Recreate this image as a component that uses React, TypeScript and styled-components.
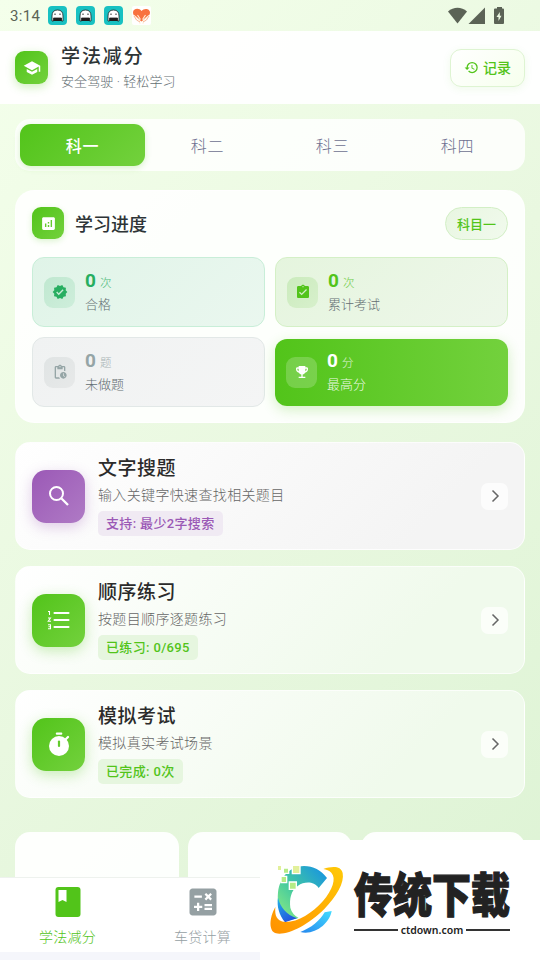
import React from "react";
import styled, { createGlobalStyle, css } from "styled-components";
import {
  MdSchool,
  MdHistory,
  MdAnalytics,
  MdVerified,
  MdAssignmentTurnedIn,
  MdPendingActions,
  MdEmojiEvents,
  MdCalculate,
} from "react-icons/md";

const Global = createGlobalStyle`
  * { box-sizing: border-box; }
  body {
    margin: 0;
    font-family: Roboto, "Noto Sans CJK SC", sans-serif;
    color: #2d3436;
    overflow: hidden;
  }
  svg { display: block; flex: none; }
`;

const green = "linear-gradient(135deg, #52c41a, #73d13d)";

const Screen = styled.div`
  position: relative;
  display: flex;
  flex-direction: column;
  width: 540px;
  height: 960px;
  overflow: hidden;
  background: linear-gradient(135deg, #f4ffeb 0%, #e9f8e0 50%, #ddf3d4 100%);
`;

const StatusBar = styled.div`
  display: flex;
  align-items: center;
  flex: none;
  height: 31px;
  padding: 0 35px 0 10px;
  color: #5b6356;
`;

const Clock = styled.span`
  width: 38px;
  font-size: 15px;
  letter-spacing: 0.3px;
`;

const AppBadges = styled.div`
  display: flex;
  gap: 9px;
`;

const SystemIcons = styled.div`
  display: flex;
  align-items: center;
  margin-left: auto;
`;

const Header = styled.header`
  display: flex;
  align-items: center;
  flex: none;
  height: 73px;
  padding: 0 15px;
  background: rgba(255, 255, 255, 0.94);
`;

const IconTile = styled.div<{ $size: number; $radius: number; $bg?: string; $shadow?: string }>`
  display: flex;
  align-items: center;
  justify-content: center;
  flex: none;
  width: ${(p) => p.$size}px;
  height: ${(p) => p.$size}px;
  border-radius: ${(p) => p.$radius}px;
  color: #fff;
  background: ${(p) => p.$bg ?? green};
  box-shadow: ${(p) => p.$shadow ?? "0 3px 10px rgba(82, 196, 26, 0.28)"};
`;

const HeaderText = styled.div`
  margin-left: 13px;
  flex: 1;
`;

const AppTitle = styled.div`
  font-size: 19px;
  line-height: 26px;
  font-weight: 500;
  letter-spacing: 1.9px;
`;

const AppSubtitle = styled.div`
  margin-top: 2px;
  font-size: 13px;
  line-height: 20px;
  font-weight: 300;
  letter-spacing: 0.1px;
  color: #636e72;
`;

const RecordButton = styled.button`
  display: flex;
  align-items: center;
  gap: 4px;
  width: 75px;
  height: 38px;
  padding: 0 0 1px 13px;
  border: 1px solid #def4d2;
  border-radius: 11px;
  background: linear-gradient(135deg, #ffffff, #f6ffed);
  box-shadow: 0 2px 8px rgba(82, 196, 26, 0.08);
  color: #52c41a;
  font: 500 14px Roboto, "Noto Sans CJK SC", sans-serif;
`;

const Tabs = styled.nav`
  display: flex;
  flex: none;
  height: 52px;
  margin: 15px 15px 0;
  padding: 5px 5px;
  border-radius: 15px;
  background: rgba(255, 255, 255, 0.83);
`;

const Tab = styled.div<{ $active?: boolean }>`
  display: flex;
  align-items: center;
  justify-content: center;
  flex: 1;
  height: 42px;
  border-radius: 11px;
  font-size: 16px;
  font-weight: 300;
  letter-spacing: 0.7px;
  color: #6e7191;
  ${(p) =>
    p.$active &&
    css`
      color: #fff;
      font-weight: 500;
      background: ${green};
      box-shadow: 0 2px 6px rgba(82, 196, 26, 0.22);
    `}
`;

const ProgressCard = styled.section`
  flex: none;
  height: 233px;
  margin: 19px 15px 0;
  padding: 15px 16px;
  border: 1px solid rgba(255, 255, 255, 0.9);
  border-radius: 19px;
  background: rgba(255, 255, 255, 0.89);
`;

const CardHead = styled.div`
  display: flex;
  align-items: center;
  height: 34px;
`;

const CardTitle = styled.div`
  flex: 1;
  margin-left: 11px;
  font-size: 18px;
  font-weight: 500;
`;

const SubjectPill = styled.div`
  display: flex;
  align-items: center;
  justify-content: center;
  width: 63px;
  height: 33px;
  border: 1px solid #d2efc5;
  border-radius: 17px;
  background: linear-gradient(135deg, #e8f6e1, #f1faed);
  color: #52c41a;
  font-size: 13px;
  font-weight: 500;
`;

const StatGrid = styled.div`
  display: grid;
  grid-template-columns: 1fr 1fr;
  grid-auto-rows: 70px;
  gap: 10px;
  margin-top: 17px;
`;

type Tone = "pass" | "total" | "pending" | "best";

const tones: Record<Tone, { bg: string; line: string; tile: string; ink: string; label: string }> = {
  pass: {
    bg: "linear-gradient(135deg, #e0f4e8, #eaf7ef)",
    line: "#c8eed8",
    tile: "linear-gradient(135deg, #c0e8d0, #ceeedb)",
    ink: "#27ae60",
    label: "#636e72",
  },
  total: {
    bg: "linear-gradient(135deg, #e5f5de, #eef7ea)",
    line: "#d4f0c6",
    tile: "linear-gradient(135deg, #cbebbd, #d7f0cc)",
    ink: "#52c41a",
    label: "#636e72",
  },
  pending: {
    bg: "linear-gradient(135deg, #f0f2f2, #f4f5f5)",
    line: "#e2e8e7",
    tile: "linear-gradient(135deg, #e0e4e4, #e7e9e9)",
    ink: "#95a5a6",
    label: "#636e72",
  },
  best: {
    bg: "linear-gradient(90deg, #52c41a, #73d13d)",
    line: "transparent",
    tile: "rgba(255, 255, 255, 0.2)",
    ink: "#ffffff",
    label: "rgba(255, 255, 255, 0.92)",
  },
};

const Stat = styled.div<{ $tone: Tone }>`
  display: flex;
  align-items: center;
  padding-left: 11px;
  border: 1px solid ${(p) => tones[p.$tone].line};
  border-radius: 12px;
  background: ${(p) => tones[p.$tone].bg};
  color: ${(p) => tones[p.$tone].ink};
  ${(p) =>
    p.$tone === "best" &&
    css`
      height: 67px;
      margin-top: 1.5px;
      padding-left: 11px;
      border: 0;
      box-shadow: 0 4px 13px rgba(82, 196, 26, 0.24);
    `}
`;

const StatTile = styled.div<{ $tone: Tone }>`
  display: flex;
  align-items: center;
  justify-content: center;
  width: 31px;
  height: 31px;
  border-radius: 9px;
  background: ${(p) => tones[p.$tone].tile};
`;

const StatText = styled.div`
  margin-left: 10px;
  padding-top: 1px;
`;

const StatValue = styled.div`
  display: flex;
  align-items: baseline;
  gap: 4px;
  height: 24px;
  font-size: 19px;
  line-height: 24px;
  font-weight: 700;
`;

const Unit = styled.span`
  font-size: 11.5px;
  font-weight: 300;
  opacity: 0.8;
`;

const StatLabel = styled.div<{ $tone: Tone }>`
  font-size: 13px;
  line-height: 23px;
  font-weight: 300;
  color: ${(p) => tones[p.$tone].label};
`;

const Features = styled.section`
  display: flex;
  flex-direction: column;
  flex: none;
  gap: 16px;
  margin: 19px 15px 0;
`;

const Feature = styled.article<{ $plain?: boolean }>`
  display: flex;
  align-items: center;
  height: 108px;
  padding: 0 16px;
  border: 1px solid rgba(255, 255, 255, 0.75);
  border-radius: 15px;
  background: ${(p) =>
    p.$plain
      ? "linear-gradient(135deg, #ffffff, #f4f4f4 80%)"
      : "linear-gradient(135deg, #ffffff, #f0faec 75%)"};
`;

const FeatureText = styled.div`
  display: flex;
  flex-direction: column;
  align-items: flex-start;
  flex: 1;
  margin-left: 13px;
`;

const FeatureTitle = styled.div`
  font-size: 19px;
  line-height: 26px;
  font-weight: 500;
  letter-spacing: 0.5px;
  color: #2b2b2b;
`;

const FeatureNote = styled.div`
  font-size: 14px;
  line-height: 26px;
  font-weight: 300;
  letter-spacing: 0.35px;
  color: #666;
`;

const Tag = styled.div<{ $violet?: boolean }>`
  margin-top: 3px;
  padding: 0 8px;
  border-radius: 5px;
  font-size: 13px;
  line-height: 25px;
  font-weight: 500;
  letter-spacing: 0.35px;
  color: ${(p) => (p.$violet ? "#9b59b6" : "#52c41a")};
  background: ${(p) => (p.$violet ? "#f0eaf3" : "#e6f6df")};
`;

const Arrow = styled.div`
  display: flex;
  align-items: center;
  justify-content: center;
  width: 27px;
  height: 27px;
  border-radius: 7px;
  background: rgba(255, 255, 255, 0.7);
`;

const Shortcuts = styled.section`
  display: grid;
  grid-template-columns: repeat(3, 1fr);
  gap: 9px;
  flex: 1;
  min-height: 0;
  margin: 34px 15px 0;
`;

const Shortcut = styled.div`
  border-radius: 15px 15px 0 0;
  background: rgba(255, 255, 255, 0.93);
`;

const BottomNav = styled.nav`
  display: grid;
  grid-template-columns: repeat(4, 135px);
  flex: none;
  height: 83px;
  border-top: 1px solid #eef2ee;
  border-bottom: 8px solid #f5f6fb;
  background: #fff;
`;

const NavItem = styled.div<{ $active?: boolean }>`
  display: flex;
  flex-direction: column;
  align-items: center;
  padding-top: 7px;
  font-size: 14px;
  line-height: 20px;
  font-weight: 300;
  letter-spacing: 0.25px;
  color: ${(p) => (p.$active ? "#52c41a" : "#95a0a3")};
`;

const NavIcon = styled.div`
  display: flex;
  align-items: center;
  height: 34px;
  margin-bottom: 8px;
  color: inherit;
`;

const Watermark = styled.aside`
  position: absolute;
  right: 0;
  bottom: 0;
  display: flex;
  width: 280px;
  height: 120px;
  padding-top: 15px;
  background: #fff;
`;

const Brand = styled.div`
  width: 156px;
  margin-left: 4px;
  color: #222;
`;

const BrandName = styled.div`
  height: 69px;
  font-family: "Noto Sans CJK SC", sans-serif;
  font-size: 39px;
  line-height: 73px;
  font-weight: 900;
  white-space: nowrap;
  transform: scaleY(1.2);
  -webkit-text-stroke: 1px #222;
`;

const BrandSite = styled.div`
  display: flex;
  align-items: center;
  gap: 3px;
  height: 12px;
  font: 600 10.5px "Noto Sans", sans-serif;
  &::before,
  &::after {
    content: "";
    flex: 1;
    height: 2px;
    background: #333;
  }
`;

const GhostBadge = () => (
  <svg width="19" height="19" viewBox="0 0 19 19">
    <rect width="19" height="19" rx="4" fill="#18c1c2" />
    <path d="M4 15V10Q4 4 9.5 4Q15 4 15 10V15H13.500V12H5.500V15Z" fill="#fff" stroke="#222" strokeWidth=".8" />
    <path d="M6 12H13.500V15H5.500Z" fill="#201c1c" />
    <path d="M7 7.500V9M12 7.500V9" stroke="#222" strokeWidth="1" />
  </svg>
);

const HeartBadge = () => (
  <svg width="19" height="19" viewBox="0 0 19 19">
    <rect width="19" height="19" rx="2" fill="#fff" />
    <path d="M9.500 15.500C5 12 1 10 1 6.500C1 2.500 7 1.500 9.500 5C12 1.500 18.500 2.500 18 7C17.500 10.500 13 13 9.500 15.500Z" fill="#f8733f" />
    <path d="M2 9.500L7.500 14L8 18M17 9.500L11.500 14L11 18M5.500 9L8.500 13.500M13.500 9L10.500 13.500" fill="none" stroke="#fff2dd" strokeWidth="1.100" />
    <path d="M2 10Q4 15 8 16M17 10Q15 15 11 16" fill="none" stroke="#f6a57e" strokeWidth=".8" />
  </svg>
);

const SystemGlyphs = () => (
  <svg width="57" height="18" viewBox="0 0 57 18" fill="#5b6356">
    <path d="M0 4.500C5.500-.5 13.500-.5 19 4.500L9.500 16.500Z" />
    <path d="M37 .500V17H20.500Z" />
    <path fillRule="evenodd" d="M49 0H54V1.500H55Q56 1.500 56 2.500V16Q56 17 55 17H47Q46 17 46 16V2.500Q46 1.500 47 1.500H49ZM51.800 5L48.500 10H50.500V14L53.500 8.800H51.800Z" />
  </svg>
);

const SearchGlyph = () => (
  <svg width="26" height="26" viewBox="0 0 26 26" fill="none" stroke="#fff" strokeWidth="2">
    <circle cx="10.500" cy="10.500" r="6.500" />
    <path d="M15.500 15.500L22 22" strokeWidth="2.300" />
  </svg>
);

const NumberedGlyph = () => (
  <svg width="26" height="26" viewBox="0 0 26 26" fill="none" stroke="#fff">
    <path d="M8.500 6H22.500M8.500 13H22.500M8.500 20H22.500" strokeWidth="2.100" strokeLinecap="round" />
    <path d="M2 4.500H3.500V8M2 11H4.500L2.200 14.200H5M2 17.800H4.500V21.700H2M2.500 19.800H4.500" strokeWidth="1.050" />
  </svg>
);

const TimerGlyph = () => (
  <svg width="26" height="26" viewBox="0 0 26 26" fill="#fff">
    <rect x="9.800" y="1.500" width="6.500" height="2.200" rx="1" />
    <circle cx="13" cy="15" r="10" />
    <path d="M20 8L22 6" stroke="#fff" strokeWidth="2.300" strokeLinecap="round" />
    <path d="M13 10.500V15" stroke="#62cb2d" strokeWidth="2.200" strokeLinecap="round" />
  </svg>
);

const Chevron = () => (
  <svg width="14" height="14" viewBox="0 0 14 14" fill="none" stroke="#666" strokeWidth="1.500">
    <path d="M4.500 1.500L10 7L4.500 12.500" />
  </svg>
);

const BookGlyph = () => (
  <svg width="26" height="32" viewBox="0 0 26 32">
    <rect x=".5" y="1" width="25" height="30" rx="3" fill="#52c41a" />
    <path d="M3.500 4H11.500V16L7.500 14L3.500 16Z" fill="#fff" />
  </svg>
);

const BrandMark = () => (
  <svg width="90" height="90" viewBox="0 0 270 270">
    <defs>
      <linearGradient id="arc" x1="0" y1="1" x2="1" y2="0">
        <stop offset="0" stopColor="#93f07f" />
        <stop offset=".45" stopColor="#43c9a0" />
        <stop offset="1" stopColor="#138fe8" />
      </linearGradient>
      <linearGradient id="deep" x1="0" y1="0" x2=".6" y2="1">
        <stop offset="0" stopColor="#20b4e6" />
        <stop offset="1" stopColor="#2452df" />
      </linearGradient>
      <linearGradient id="orbit" x1="0" y1="1" x2="1" y2="0">
        <stop offset="0" stopColor="#ff9100" />
        <stop offset="1" stopColor="#ffc907" />
      </linearGradient>
      <linearGradient id="tail" x1="0" y1="1" x2="1" y2="0">
        <stop offset="0" stopColor="#2587ee" />
        <stop offset="1" stopColor="#43dcff" />
      </linearGradient>
    </defs>
    <path d="M54 112C60 64 91 34 132 33C160 33 183 45 201 69L176 99C161 77 132 80 114 92C92 107 88 132 91 158Q96 178 116 189L75 199C57 174 51 145 54 112Z" fill="url(#arc)" />
    <path d="M54 128C61 157 79 179 111 190L75 202C57 179 50 153 54 128Z" fill="url(#deep)" />
    <path d="M190 42C218 33 243 33 248 54C254 83 229 125 193 162C144 211 81 242 48 235C26 229 27 190 46 156C44 182 49 198 76 201C112 202 158 174 189 138C217 105 230 70 214 53C208 46 199 44 190 42Z" fill="url(#orbit)" />
    <path d="M121 231C153 219 180 197 194 172L215 168C209 205 164 242 121 231Z" fill="url(#tail)" />
    <g stroke="#fff" strokeWidth="4">
      <path d="M52 31H65V47H52ZM97 31H120V56H97Z" fill="#e2f09a" />
      <path d="M70 39H86V55H70ZM63 64H80V83H63ZM88 81H109V103H88Z" fill="#b5ec86" />
    </g>
  </svg>
);

const stats: { tone: Tone; icon: React.ReactNode; unit: string; label: string }[] = [
  { tone: "pass", icon: <MdVerified size={16} />, unit: "次", label: "合格" },
  { tone: "total", icon: <MdAssignmentTurnedIn size={16} />, unit: "次", label: "累计考试" },
  { tone: "pending", icon: <MdPendingActions size={16} />, unit: "题", label: "未做题" },
  { tone: "best", icon: <MdEmojiEvents size={16} />, unit: "分", label: "最高分" },
];

const features = [
  { title: "文字搜题", note: "输入关键字快速查找相关题目", tag: "支持: 最少2字搜索", icon: <SearchGlyph />, violet: true },
  { title: "顺序练习", note: "按题目顺序逐题练习", tag: "已练习: 0/695", icon: <NumberedGlyph />, violet: false },
  { title: "模拟考试", note: "模拟真实考试场景", tag: "已完成: 0次", icon: <TimerGlyph />, violet: false },
];

export default function App() {
  return (
    <>
      <Global />
      <Screen>
        <StatusBar>
          <Clock>3:14</Clock>
          <AppBadges>
            <GhostBadge />
            <GhostBadge />
            <GhostBadge />
            <HeartBadge />
          </AppBadges>
          <SystemIcons>
            <SystemGlyphs />
          </SystemIcons>
        </StatusBar>

        <Header>
          <IconTile $size={33} $radius={9}>
            <MdSchool size={18} />
          </IconTile>
          <HeaderText>
            <AppTitle>学法减分</AppTitle>
            <AppSubtitle>安全驾驶 · 轻松学习</AppSubtitle>
          </HeaderText>
          <RecordButton>
            <MdHistory size={15} />
            记录
          </RecordButton>
        </Header>

        <Tabs>
          {["科一", "科二", "科三", "科四"].map((name, i) => (
            <Tab key={name} $active={i === 0}>
              {name}
            </Tab>
          ))}
        </Tabs>

        <ProgressCard>
          <CardHead>
            <IconTile $size={32} $radius={9} $shadow="0 2px 6px rgba(82, 196, 26, 0.2)">
              <MdAnalytics size={17} />
            </IconTile>
            <CardTitle>学习进度</CardTitle>
            <SubjectPill>科目一</SubjectPill>
          </CardHead>
          <StatGrid>
            {stats.map((s) => (
              <Stat key={s.tone} $tone={s.tone}>
                <StatTile $tone={s.tone}>{s.icon}</StatTile>
                <StatText>
                  <StatValue>
                    0<Unit>{s.unit}</Unit>
                  </StatValue>
                  <StatLabel $tone={s.tone}>{s.label}</StatLabel>
                </StatText>
              </Stat>
            ))}
          </StatGrid>
        </ProgressCard>

        <Features>
          {features.map((f) => (
            <Feature key={f.title} $plain={f.violet}>
              <IconTile
                $size={53}
                $radius={14}
                $bg={f.violet ? "linear-gradient(135deg, #9b59b6, #af7ac5)" : green}
                $shadow={f.violet ? "0 4px 14px rgba(155, 89, 182, 0.3)" : "0 4px 14px rgba(82, 196, 26, 0.3)"}
              >
                {f.icon}
              </IconTile>
              <FeatureText>
                <FeatureTitle>{f.title}</FeatureTitle>
                <FeatureNote>{f.note}</FeatureNote>
                <Tag $violet={f.violet}>{f.tag}</Tag>
              </FeatureText>
              <Arrow>
                <Chevron />
              </Arrow>
            </Feature>
          ))}
        </Features>

        <Shortcuts>
          <Shortcut />
          <Shortcut />
          <Shortcut />
        </Shortcuts>

        <BottomNav>
          <NavItem $active>
            <NavIcon>
              <BookGlyph />
            </NavIcon>
            学法减分
          </NavItem>
          <NavItem>
            <NavIcon>
              <MdCalculate size={36} />
            </NavIcon>
            车贷计算
          </NavItem>
        </BottomNav>

        <Watermark>
          <BrandMark />
          <Brand>
            <BrandName>传统下载</BrandName>
            <BrandSite>ctdown.com</BrandSite>
          </Brand>
        </Watermark>
      </Screen>
    </>
  );
}
